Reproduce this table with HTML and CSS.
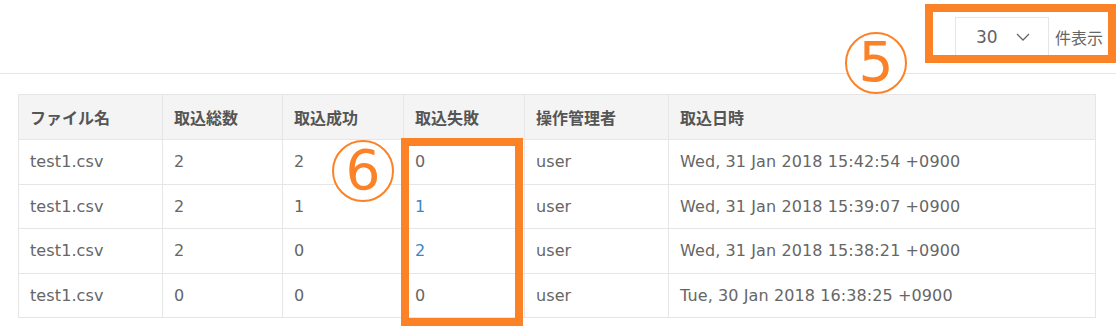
FILE: index.html
```html
<!DOCTYPE html>
<html lang="ja">
<head>
<meta charset="utf-8">
<title>取込履歴</title>
<link rel="stylesheet" href="styles.css">
</head>
<body>
<div class="page">
  <div class="toolbar">
    <div class="select">
      <span class="select-value">30</span>
      <svg class="chevron" width="14" height="8" viewBox="0 0 14 8"><path d="M1 1 L7 7 L13 1" fill="none" stroke="#666" stroke-width="1.3"/></svg>
    </div>
    <span class="per-page">件表示</span>
  </div>
  <div class="content">
    <table class="history">
      <colgroup>
        <col class="c1"><col class="c2"><col class="c3"><col class="c4"><col class="c5"><col class="c6">
      </colgroup>
      <thead>
        <tr><th>ファイル名</th><th>取込総数</th><th>取込成功</th><th>取込失敗</th><th>操作管理者</th><th>取込日時</th></tr>
      </thead>
      <tbody>
        <tr><td>test1.csv</td><td>2</td><td>2</td><td>0</td><td>user</td><td>Wed, 31 Jan 2018 15:42:54 +0900</td></tr>
        <tr><td>test1.csv</td><td>2</td><td>1</td><td><a class="link">1</a></td><td>user</td><td>Wed, 31 Jan 2018 15:39:07 +0900</td></tr>
        <tr><td>test1.csv</td><td>2</td><td>0</td><td><a class="link">2</a></td><td>user</td><td>Wed, 31 Jan 2018 15:38:21 +0900</td></tr>
        <tr><td>test1.csv</td><td>0</td><td>0</td><td>0</td><td>user</td><td>Tue, 30 Jan 2018 16:38:25 +0900</td></tr>
      </tbody>
    </table>
  </div>
  <div class="mark mark-box box-5"></div>
  <div class="mark mark-circle circle-5">5</div>
  <div class="mark mark-box box-6"></div>
  <div class="mark mark-circle circle-6">6</div>
</div>
</body>
</html>
```
FILE: styles.css
```css
html, body {
  margin: 0;
  padding: 0;
  background: #fff;
}
body {
  font-family: "DejaVu Sans", "Noto Sans CJK JP", sans-serif;
  font-size: 16px;
  color: #666;
}
.page {
  position: relative;
  width: 1116px;
  height: 332px;
  overflow: hidden;
}
.toolbar {
  height: 73px;
  border-bottom: 1px solid #e6e6e6;
  display: flex;
  justify-content: flex-end;
  align-items: center;
  padding-right: 13px;
}
.select {
  box-sizing: border-box;
  width: 94px;
  height: 40px;
  border: 1px solid #e6e6e6;
  display: flex;
  align-items: center;
  padding-left: 20px;
  margin-top: 1px;
}
.select-value {
  font-size: 17px;
  color: #5f6368;
  width: 40px;
}
.chevron {
  display: block;
}
.per-page {
  margin-left: 6px;
  font-family: "Noto Sans CJK JP", sans-serif;
  font-size: 16px;
  color: #666;
}
.content {
  padding: 20px 21px 0 18px;
}
.history {
  width: 1077px;
  border-collapse: collapse;
  table-layout: fixed;
}
.c1 { width: 144px; }
.c2 { width: 120px; }
.c3 { width: 121px; }
.c4 { width: 121px; }
.c5 { width: 144px; }
.c6 { width: 427px; }
.history th,
.history td {
  border: 1px solid #e6e6e6;
  padding: 0 11px;
  text-align: left;
  white-space: nowrap;
}
.history th {
  height: 44px;
  background: #f4f4f4;
  font-family: "Noto Sans CJK JP", sans-serif;
  font-weight: 700;
  color: #555;
}
.history td {
  height: 43.5px;
  color: #666;
  letter-spacing: 0.1px;
}
.link {
  color: #3d86c6;
  text-decoration: none;
}
.mark {
  position: absolute;
  box-sizing: border-box;
}
.mark-box {
  border: 8px solid #fb8226;
}
.box-5 {
  left: 925px;
  top: 4px;
  width: 191px;
  height: 59px;
}
.box-6 {
  left: 401px;
  top: 138px;
  width: 122px;
  height: 188px;
}
.mark-circle {
  width: 62px;
  height: 62px;
  border: 2.5px solid #fb8226;
  border-radius: 50%;
  background: #fff;
  color: #fb8226;
  font-family: "DejaVu Sans", sans-serif;
  font-size: 55px;
  line-height: 57px;
  text-align: center;
}
.circle-5 {
  left: 845px;
  top: 32px;
}
.circle-6 {
  left: 332px;
  top: 140px;
}
```
